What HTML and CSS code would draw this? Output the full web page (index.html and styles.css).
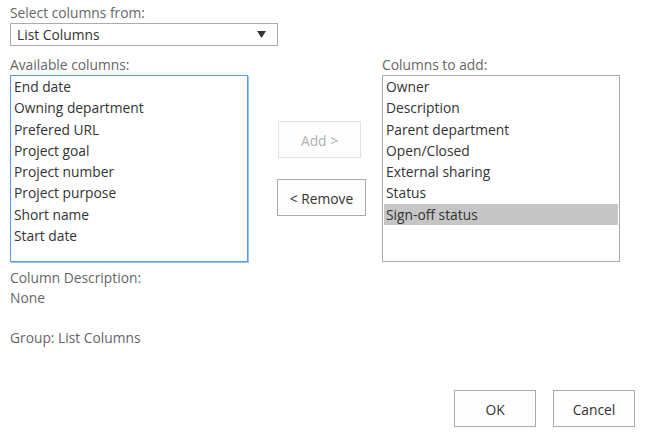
FILE: index.html
```html
<!DOCTYPE html>
<html>
<head>
<meta charset="utf-8">
<link rel="stylesheet" href="styles.css">
</head>
<body>
<div class="page">
  <div class="label top-label">Select columns from:</div>
  <div class="select">
    <span>List Columns</span>
    <svg class="arrow" width="9" height="7" viewBox="0 0 9 7"><path d="M0 0H9L4.5 7Z" fill="#333"/></svg>
  </div>
  <div class="picker">
    <div class="col">
      <div class="label">Available columns:</div>
      <div class="listbox focused">
        <div class="item">End date</div>
        <div class="item">Owning department</div>
        <div class="item">Prefered URL</div>
        <div class="item">Project goal</div>
        <div class="item">Project number</div>
        <div class="item">Project purpose</div>
        <div class="item">Short name</div>
        <div class="item">Start date</div>
      </div>
      <div class="desc">
        <div>Column Description:</div>
        <div>None</div>
        <div class="spacer"></div>
        <div>Group: List Columns</div>
      </div>
    </div>
    <div class="mid">
      <button class="btn add" disabled>Add &gt;</button>
      <button class="btn remove">&lt; Remove</button>
    </div>
    <div class="col">
      <div class="label">Columns to add:</div>
      <div class="listbox">
        <div class="item">Owner</div>
        <div class="item">Description</div>
        <div class="item">Parent department</div>
        <div class="item">Open/Closed</div>
        <div class="item">External sharing</div>
        <div class="item">Status</div>
        <div class="item selected">Sign-off status</div>
      </div>
    </div>
  </div>
  <div class="actions">
    <button class="btn action">OK</button>
    <button class="btn action">Cancel</button>
  </div>
</div>
</body>
</html>
```
FILE: styles.css
```css
* { box-sizing: border-box; }
html, body { margin: 0; padding: 0; background: #fff; }
body {
  font-family: "Open Sans", "Noto Sans", sans-serif;
  font-size: 13.8px;
  color: #333;
  width: 646px;
  height: 445px;
  overflow: hidden;
}
.page { padding: 3px 0 0 10px; }
.label { color: #666; line-height: 20px; height: 20px; }
.select {
  width: 268px;
  height: 23px;
  border: 1px solid #ababab;
  display: flex;
  align-items: center;
  justify-content: space-between;
  padding: 0 11px 0 6px;
  color: #333;
  line-height: 21px;
}
.arrow { display: block; }
.picker { display: flex; margin-top: 9px; }
.col { width: 238px; display: flex; flex-direction: column; }
.col .label { margin-bottom: 0; height: 20px; }
.listbox {
  margin-top: 0;
  height: 187px;
  border: 1px solid #ababab;
  padding: 0 1px;
}
.listbox.focused {
  border-color: #5b9ae8;
  box-shadow: 1px 1px 0 0 #9cc4f2;
}
.item { line-height: 21.3px; height: 21.3px; padding-left: 2px; white-space: nowrap; }
.item.selected { background: #c6c6c6; }
.desc { margin-top: 6px; color: #666; line-height: 20px; }
.spacer { height: 20px; }
.mid {
  width: 134px;
  display: flex;
  flex-direction: column;
  align-items: flex-start;
  padding: 66px 0 0 29px;
  gap: 21px;
}
.btn {
  font-family: inherit;
  font-size: 13.8px;
  height: 37px;
  background: #fdfdfd;
  border: 1px solid #ababab;
  color: #333;
  padding: 2px 0 0;
  cursor: pointer;
}
.btn.add {
  width: 83px;
  margin-left: 1px;
  border-color: #e1e1e1;
  color: #b1b1b1;
}
.btn.remove { width: 89px; }
.actions {
  display: flex;
  justify-content: flex-end;
  gap: 17px;
  padding-right: 11px;
  margin-top: 42px;
}
.btn.action { width: 82px; }
```
